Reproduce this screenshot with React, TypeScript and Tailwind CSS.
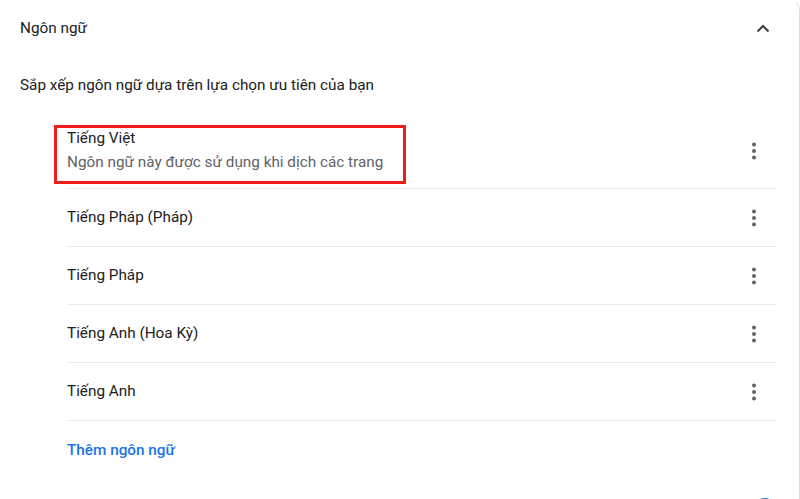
import React from "react";

const languages = [
  { name: "Tiếng Việt", note: "Ngôn ngữ này được sử dụng khi dịch các trang" },
  { name: "Tiếng Pháp (Pháp)" },
  { name: "Tiếng Pháp" },
  { name: "Tiếng Anh (Hoa Kỳ)" },
  { name: "Tiếng Anh" },
];

function MoreIcon() {
  return (
    <svg width="20" height="20" viewBox="0 0 20 20" className="text-[#5f6368]">
      <circle cx="10" cy="3.5" r="2" fill="currentColor" />
      <circle cx="10" cy="10" r="2" fill="currentColor" />
      <circle cx="10" cy="16.5" r="2" fill="currentColor" />
    </svg>
  );
}

function ChevronUp() {
  return (
    <svg width="14" height="9" viewBox="0 0 14 9" className="text-[#3c4043]">
      <path d="M1.5 7.5 L7 2 L12.5 7.5" fill="none" stroke="currentColor" strokeWidth="2" />
    </svg>
  );
}

export default function App() {
  return (
    <div
      className="h-[499px] w-[800px] overflow-hidden bg-white text-[15.3px] text-[#202124]"
      style={{ fontFamily: "Roboto, 'Noto Sans', sans-serif" }}
    >
      <div className="h-[530px] w-full rounded-tr-[10px] border-r border-t border-r-[#dadce0] border-t-transparent">
        {/* section header */}
        <div className="flex h-[55px] items-center justify-between pl-5 pr-[29px]">
          <span>Ngôn ngữ</span>
          <ChevronUp />
        </div>

        <div className="flex h-[58px] items-center pl-5">
          Sắp xếp ngôn ngữ dựa trên lựa chọn ưu tiên của bạn
        </div>

        <div className="ml-[67px] mr-[23px]">
          {languages.map((lang, i) => (
            <div
              key={lang.name}
              className={`flex items-center justify-between border-b border-[#e8eaed] pr-[12px] ${
                i === 0 ? "h-[75px]" : "h-[58px]"
              }`}
            >
              {lang.note ? (
                <div className="-ml-[13px] mt-[11px] flex h-[59px] w-[352px] flex-col gap-[3px] self-start border-[3px] border-[#ef1c1c] pl-[10px]">
                  <span className="leading-[21px]">{lang.name}</span>
                  <span className="leading-[21px] text-[#5f6368]">{lang.note}</span>
                </div>
              ) : (
                <span>{lang.name}</span>
              )}
              <MoreIcon />
            </div>
          ))}

          <div className="flex h-[58px] items-center font-medium text-[#1a73e8]">
            Thêm ngôn ngữ
          </div>
        </div>

        {/* next setting row, cut by the window edge */}
        <div className="mt-[18px] flex items-center justify-between pl-[28px] pr-[24px]">
          <span>Đề xuất dịch các trang không sử dụng ngôn ngữ mà bạn đọc</span>
          <div className="relative h-[14px] w-[34px] rounded-full bg-[#8ab4f8]">
            <div className="absolute -top-[3px] right-0 h-[20px] w-[20px] rounded-full bg-[#1a73e8]" />
          </div>
        </div>
      </div>
    </div>
  );
}
